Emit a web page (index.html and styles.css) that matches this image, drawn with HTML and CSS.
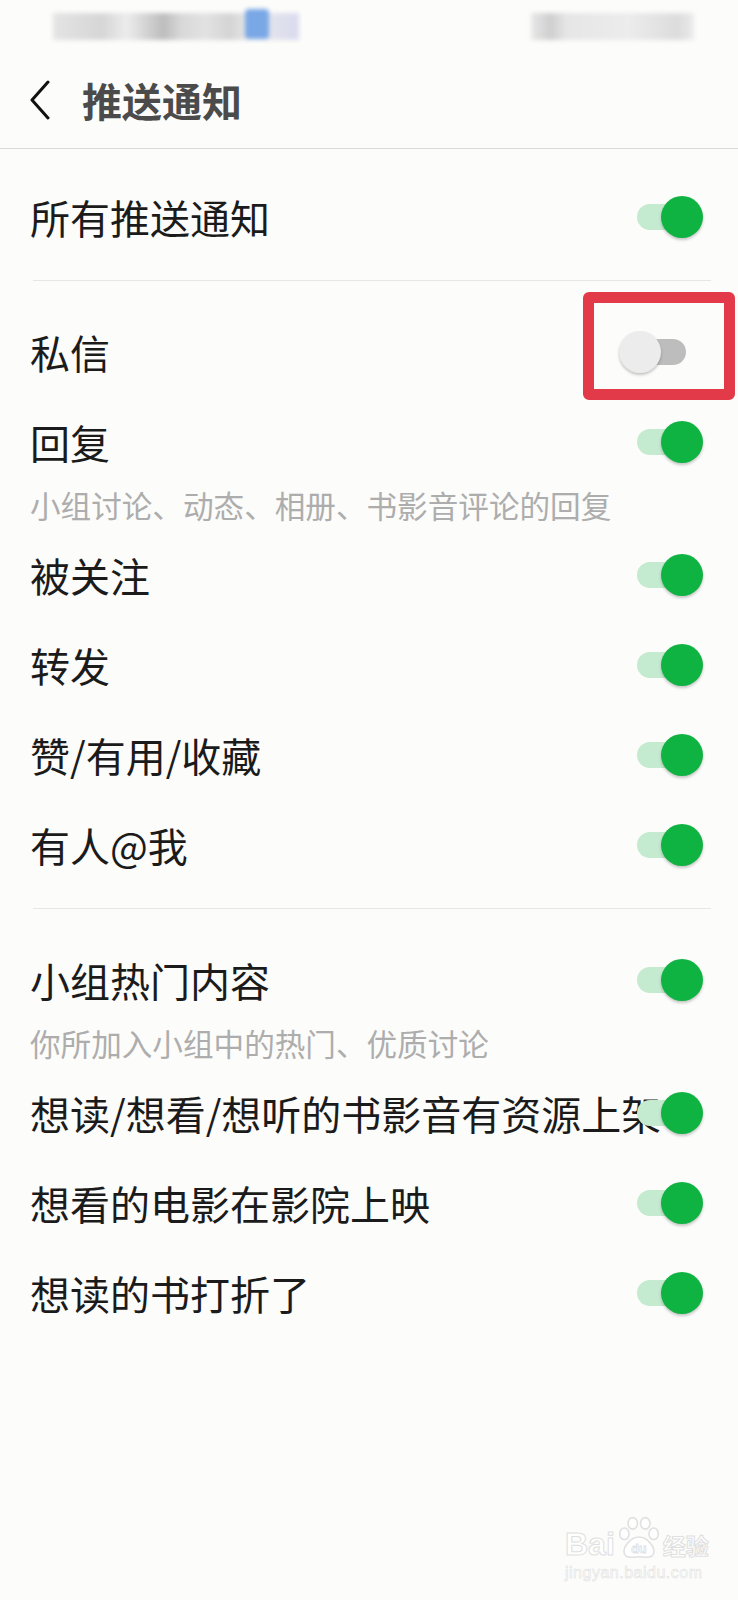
FILE: index.html
```html
<!DOCTYPE html>
<html lang="zh-CN">
<head>
  <meta charset="UTF-8">
  <meta name="viewport" content="width=device-width, initial-scale=1.0">
  <title>推送通知</title>
  <link rel="stylesheet" href="styles.css">
</head>
<body>
  <div class="statusbar">
    <div class="blur blur-left"><span class="blur-blue"></span></div>
    <div class="blur blur-right"></div>
  </div>

  <div class="header">
    <svg class="back" width="26" height="40" viewBox="0 0 26 40">
      <path d="M21 2 L5 20 L21 38" fill="none" stroke="#111" stroke-width="3" stroke-linecap="round" stroke-linejoin="round"/>
    </svg>
    <h1 class="title">推送通知</h1>
  </div>

  <div class="list">
    <div class="row">
      <span class="label">所有推送通知</span>
      <span class="toggle on"><span class="track"></span><span class="thumb"></span></span>
    </div>

    <div class="divider"></div>

    <div class="row">
      <span class="label">私信</span>
      <span class="toggle"><span class="track"></span><span class="thumb"></span></span>
      <div class="mark"></div>
    </div>
    <div class="item">
      <div class="row">
        <span class="label">回复</span>
        <span class="toggle on"><span class="track"></span><span class="thumb"></span></span>
      </div>
      <div class="sub">小组讨论、动态、相册、书影音评论的回复</div>
    </div>
    <div class="row">
      <span class="label">被关注</span>
      <span class="toggle on"><span class="track"></span><span class="thumb"></span></span>
    </div>
    <div class="row">
      <span class="label">转发</span>
      <span class="toggle on"><span class="track"></span><span class="thumb"></span></span>
    </div>
    <div class="row">
      <span class="label">赞/有用/收藏</span>
      <span class="toggle on"><span class="track"></span><span class="thumb"></span></span>
    </div>
    <div class="row">
      <span class="label">有人@我</span>
      <span class="toggle on"><span class="track"></span><span class="thumb"></span></span>
    </div>

    <div class="divider"></div>

    <div class="item">
      <div class="row">
        <span class="label">小组热门内容</span>
        <span class="toggle on"><span class="track"></span><span class="thumb"></span></span>
      </div>
      <div class="sub">你所加入小组中的热门、优质讨论</div>
    </div>
    <div class="row">
      <span class="label">想读/想看/想听的书影音有资源上架</span>
      <span class="toggle on"><span class="track"></span><span class="thumb"></span></span>
    </div>
    <div class="row">
      <span class="label">想看的电影在影院上映</span>
      <span class="toggle on"><span class="track"></span><span class="thumb"></span></span>
    </div>
    <div class="row">
      <span class="label">想读的书打折了</span>
      <span class="toggle on"><span class="track"></span><span class="thumb"></span></span>
    </div>
  </div>

  <div class="watermark">
    <div class="wm-top">
      <span class="wm-bai">Bai</span>
      <svg class="wm-paw" width="46" height="44" viewBox="0 0 44 42">
        <g fill="#fff" stroke="#e0e0e0" stroke-width="1.5">
          <ellipse cx="8" cy="17" rx="4.5" ry="5.5"/>
          <ellipse cx="16" cy="7" rx="4.5" ry="5.5"/>
          <ellipse cx="28" cy="7" rx="4.5" ry="5.5"/>
          <ellipse cx="36" cy="17" rx="4.5" ry="5.5"/>
          <path d="M22 20 C30 20 38 30 36 36 C34 41 27 39 22 39 C17 39 10 41 8 36 C6 30 14 20 22 20 Z"/>
        </g>
        <text x="22" y="35" text-anchor="middle" class="wm-du">du</text>
      </svg>
      <span class="wm-cn">经验</span>
    </div>
    <div class="wm-url">jingyan.baidu.com</div>
  </div>
</body>
</html>
```

FILE: styles.css
```css
body {
  margin: 0;
  background: #fcfcfa;
  font-family: "Noto Sans CJK SC", "Noto Sans", sans-serif;
  color: #1b1b1b;
  position: relative;
  min-height: 1600px;
  overflow: hidden;
}

/* status bar (blurred in the screenshot) */
.statusbar {
  height: 52px;
  display: flex;
  justify-content: space-between;
  align-items: flex-start;
  padding: 13px 44px 0 53px;
  box-sizing: border-box;
}
.blur {
  height: 27px;
  filter: blur(2px);
  position: relative;
}
.blur-left {
  width: 246px;
  background: linear-gradient(90deg, #e4e4e4 0%, #d6d6d6 20%, #ececec 30%, #bdbdbd 45%, #d8d8d8 52%, #e2e2e2 62%, #d4d4d4 72%, #e9e9e9 80%, #d9dbef 100%);
}
.blur-blue {
  position: absolute;
  left: 192px;
  top: -4px;
  width: 24px;
  height: 30px;
  border-radius: 4px;
  background: #7aa8e6;
}
.blur-right {
  width: 163px;
  background: linear-gradient(90deg, #e8e8e8 0%, #cfcfcf 12%, #e6e6e6 22%, #ececec 60%, #dcdcdc 90%, #ececec 100%);
}

/* header */
.header {
  height: 96px;
  display: flex;
  align-items: center;
  padding-left: 27px;
  border-bottom: 1px solid #d9d9d9;
}
.back {
  display: block;
}
.title {
  margin: 0 0 0 29px;
  font-size: 40px;
  line-height: 1;
  font-weight: 700;
  color: #4b4b4b;
}

/* list */
.list {
  padding-top: 23px;
}
.row {
  position: relative;
  height: 90px;
  display: flex;
  align-items: center;
  padding: 0 35px 0 30px;
}
.label {
  flex: 1;
  min-width: 0;
  white-space: nowrap;
  font-size: 40px;
  line-height: 1;
}
.sub {
  padding: 0 30px 7px;
  font-size: 30.6px;
  line-height: 36px;
  color: #adadad;
}
.divider {
  height: 1px;
  background: #e6e6e6;
  margin: 18px 27px 26px 33px;
}

/* switch */
.toggle {
  position: relative;
  flex: none;
  width: 84px;
  height: 42px;
}
.track {
  position: absolute;
  left: 18px;
  top: 8px;
  width: 49px;
  height: 26px;
  border-radius: 13px;
  background: #bdbdbd;
}
.thumb {
  position: absolute;
  left: 0;
  top: 0;
  width: 42px;
  height: 42px;
  border-radius: 50%;
  background: #ececec;
  box-shadow: 0 2px 3px rgba(0,0,0,0.22);
}
.toggle.on .track {
  background: #c4ebcf;
}
.toggle.on .thumb {
  left: 42px;
  background: #0fb342;
}

/* red annotation box */
.mark {
  position: absolute;
  left: 583px;
  top: -15px;
  width: 152px;
  height: 108px;
  box-sizing: border-box;
  border: 11px solid #e23a49;
  border-radius: 6px;
}

/* watermark */
.watermark {
  position: absolute;
  left: 565px;
  top: 1516px;
  color: #fff;
  font-family: "Liberation Sans", Arial, sans-serif;
}
.wm-top {
  display: flex;
  align-items: flex-end;
}
.wm-bai {
  font-size: 32px;
  font-weight: 700;
  line-height: 1;
  -webkit-text-stroke: 1px #e0e0e0;
}
.wm-paw {
  display: block;
  margin: 0 1px;
}
.wm-du {
  font-family: "Liberation Sans", Arial, sans-serif;
  font-size: 12px;
  font-weight: 700;
  fill: #fff;
  stroke: #e0e0e0;
  stroke-width: 0.8;
}
.wm-cn {
  font-family: "Noto Sans CJK SC", sans-serif;
  font-size: 23px;
  font-weight: 700;
  line-height: 1;
  margin-bottom: 3px;
  -webkit-text-stroke: 1px #e0e0e0;
}
.wm-url {
  margin-top: 4px;
  font-size: 16px;
  letter-spacing: 0.5px;
  -webkit-text-stroke: 0.6px #e2e2e2;
}
```
